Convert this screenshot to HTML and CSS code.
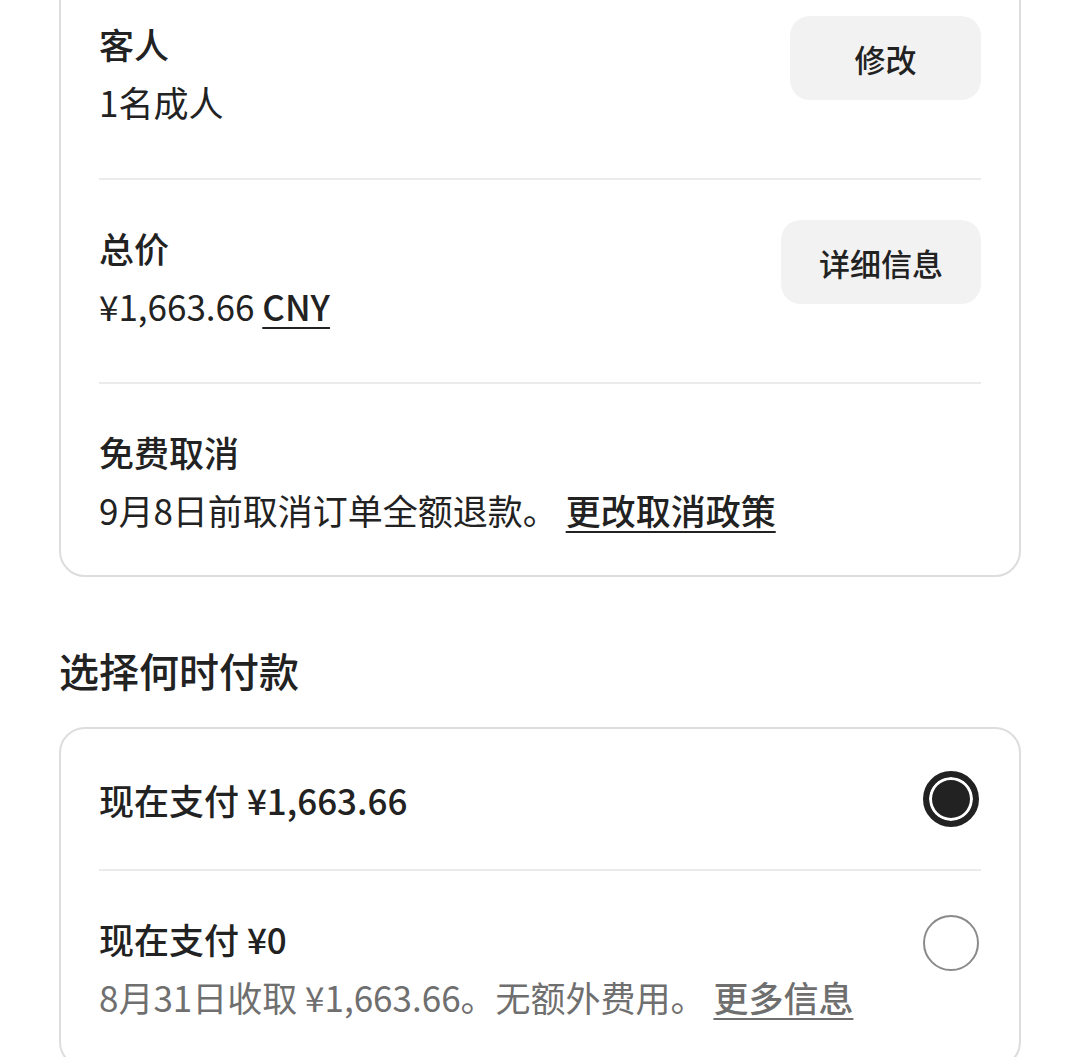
FILE: index.html
```html
<!DOCTYPE html>
<html lang="zh-CN">
<head>
<meta charset="utf-8">
<link rel="stylesheet" href="styles.css">
</head>
<body>
<div class="card card-top">
  <div class="row">
    <div class="info">
      <div class="title">客人</div>
      <div class="text">1名成人</div>
    </div>
    <button class="btn">修改</button>
  </div>
  <div class="row">
    <div class="info">
      <div class="title">总价</div>
      <div class="text">¥1,663.66 <span class="link">CNY</span></div>
    </div>
    <button class="btn">详细信息</button>
  </div>
  <div class="row last">
    <div class="info">
      <div class="title">免费取消</div>
      <div class="text">9月8日前取消订单全额退款。 <span class="link">更改取消政策</span></div>
    </div>
  </div>
</div>

<h2 class="heading">选择何时付款</h2>

<div class="card card-pay">
  <div class="row pay">
    <div class="info">
      <div class="title">现在支付 ¥1,663.66</div>
    </div>
    <span class="radio checked"></span>
  </div>
  <div class="row pay last">
    <div class="info">
      <div class="title">现在支付 ¥0</div>
      <div class="text sub">8月31日收取 ¥1,663.66。无额外费用。 <span class="link">更多信息</span></div>
    </div>
    <span class="radio"></span>
  </div>
</div>
</body>
</html>
```

FILE: styles.css
```css
html, body {
  margin: 0;
  padding: 0;
  background: #ffffff;
}
body {
  font-family: "Noto Sans CJK SC", "Noto Sans", sans-serif;
  color: #222222;
  font-size: 35px;
  overflow: hidden;
}
.card {
  margin: 0 59px;
  border: 2px solid #dddddd;
  border-radius: 26px;
  padding: 0 38px;
}
.card-top {
  margin-top: -29px;
}
.row {
  display: flex;
  justify-content: space-between;
  align-items: flex-start;
  padding: 39px 0 47px;
  border-bottom: 2px solid #ebebeb;
}
.card-top .row:first-child {
  padding-top: 42px;
}
.row.last {
  border-bottom: none;
  padding-bottom: 36px;
}
.title {
  font-weight: 500;
  line-height: 58px;
}
.text {
  line-height: 58px;
}
.link {
  font-weight: 500;
  text-decoration: underline;
  text-decoration-thickness: 2px;
  text-underline-offset: 6px;
}
.sub {
  color: #6f6f6f;
}
.btn {
  font-family: inherit;
  font-size: 31px;
  font-weight: 500;
  color: #222222;
  background: #f2f2f2;
  border: none;
  border-radius: 20px;
  height: 84px;
  min-width: 191px;
  padding: 0 38px;
  margin-top: 1px;
}
.heading {
  margin: 65px 59px 29px;
  font-size: 40px;
  font-weight: 500;
  line-height: 56px;
}
.card-pay .row.pay:first-child {
  padding-top: 42px;
  padding-bottom: 40px;
}
.card-pay .row.last {
  padding-top: 39px;
  padding-bottom: 40px;
}
.radio {
  width: 56px;
  height: 56px;
  box-sizing: border-box;
  border-radius: 50%;
  border: 2px solid #8a8a8a;
  margin-right: 2px;
  margin-top: 5px;
  flex: none;
}
.radio.checked {
  border: 6px solid #222222;
  background: #222222;
  box-shadow: inset 0 0 0 3px #ffffff;
  margin-top: 0;
}
```
